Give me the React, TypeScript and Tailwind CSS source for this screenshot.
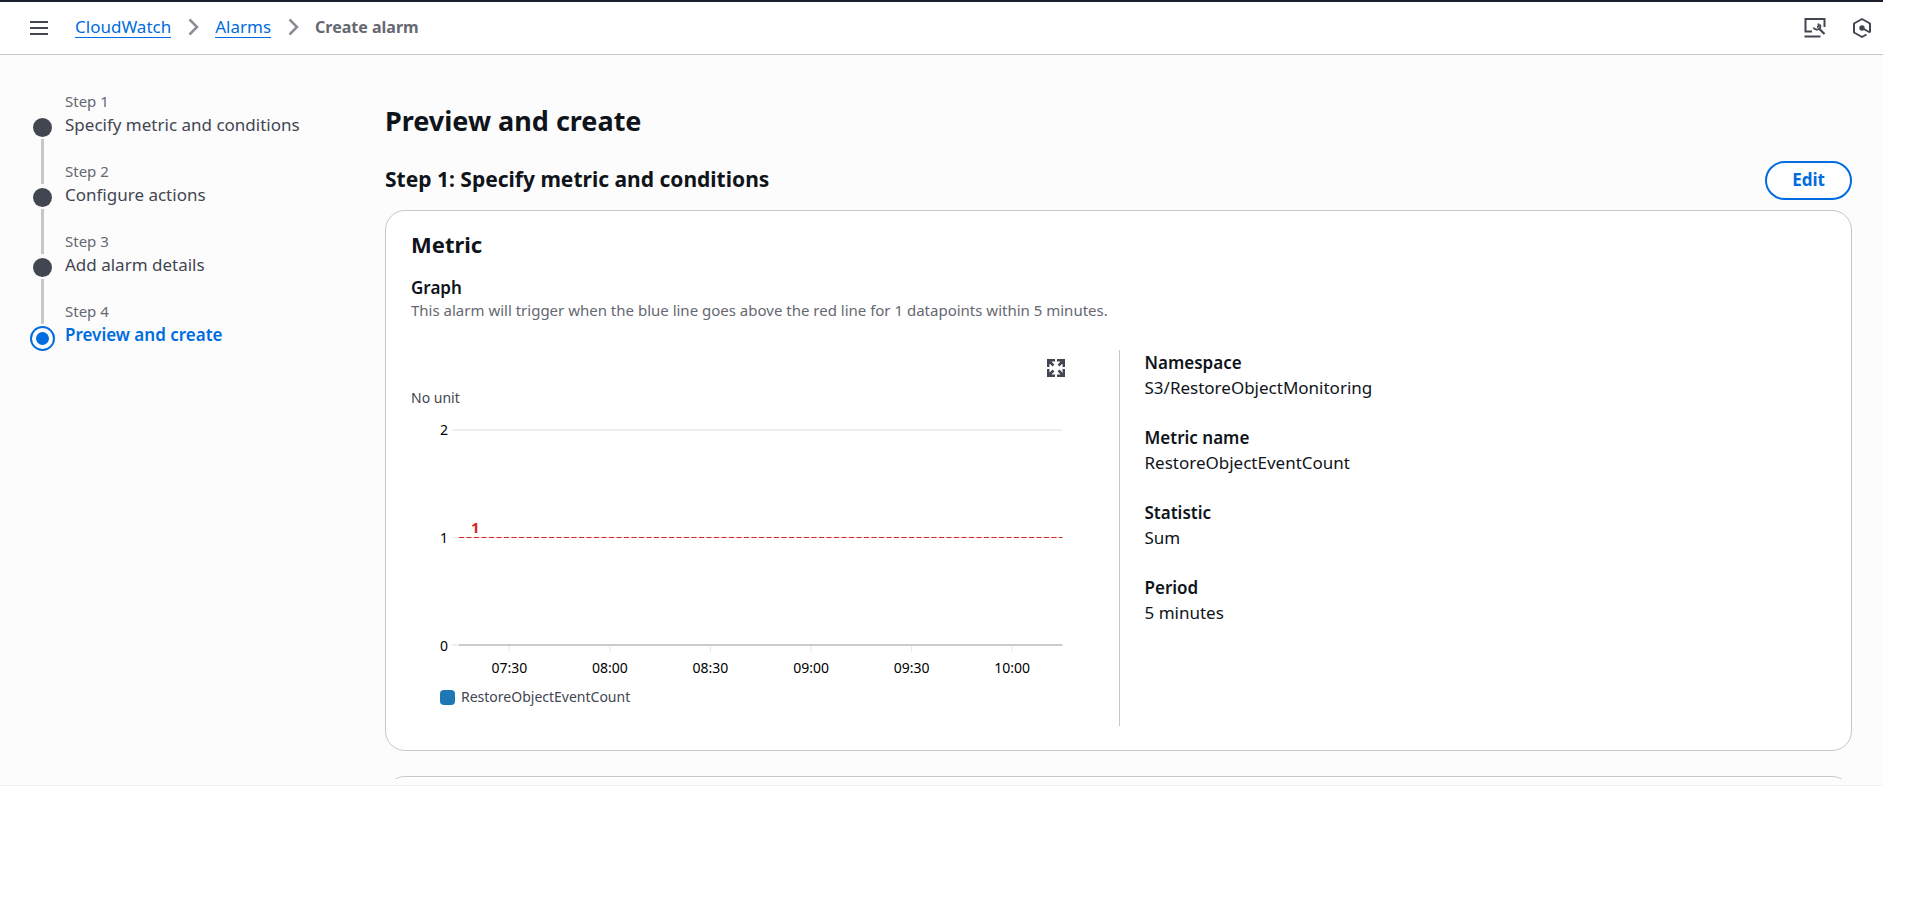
import React from "react";

const steps = [
  "Specify metric and conditions",
  "Configure actions",
  "Add alarm details",
  "Preview and create",
];

const details = [
  ["Namespace", "S3/RestoreObjectMonitoring"],
  ["Metric name", "RestoreObjectEventCount"],
  ["Statistic", "Sum"],
  ["Period", "5 minutes"],
];

const times = ["07:30", "08:00", "08:30", "09:00", "09:30", "10:00"];
const tickPositions = ["8.33%", "25%", "41.67%", "58.33%", "75%", "91.67%"];

function Chevron() {
  return (
    <svg className="h-5 w-5" viewBox="0 0 20 20" fill="none" stroke="#8c8c94" strokeWidth="2.5" aria-hidden="true">
      <path d="M6.500 2.500l7.500 7.500-7.500 7.500" />
    </svg>
  );
}

function Header() {
  return (
    <header className="flex h-[55px] items-center border-t-2 border-b border-t-[#1b1f2b] border-b-[#c6c6cd] bg-white pr-[10px] pl-[29px]">
      <button type="button" aria-label="Open navigation" className="flex h-5 w-5 items-center justify-center">
        <svg className="h-5 w-5" viewBox="0 0 20 20" stroke="#424650" strokeWidth="2" aria-hidden="true">
          <path d="M1 4h18M1 10h18M1 16h18" />
        </svg>
      </button>
      <nav aria-label="Breadcrumb" className="ml-[26px] flex flex-1 items-center pb-0.5 text-[17px] leading-[21px]">
        <a href="#cloudwatch" className="border-b border-[#006ce0] text-[#006ce0]">CloudWatch</a>
        <span className="mx-3"><Chevron /></span>
        <a href="#alarms" className="border-b border-[#006ce0] text-[#006ce0]">Alarms</a>
        <span className="mx-3"><Chevron /></span>
        <span className="text-[16px] font-bold text-[#656871]">Create alarm</span>
      </nav>
      <div className="flex items-center gap-[25px]">
        <button type="button" aria-label="Console tools">
          <svg className="h-[22px] w-[22px]" viewBox="0 0 22 22" fill="none" stroke="#424650" strokeWidth="2" aria-hidden="true">
            <path d="M8 14.500H1.500V2h19v8M.5 19.500h16" />
            <path d="M15 11.500l5.500 5.500" strokeWidth="2.200" />
            <path d="M14.500 6.500v2.300a1.200 1.200 0 0 1-1.200 1.200H13M9.500 10.500c.6 1.700 3.500 2.700 5.500 1.500 1.300-.8 1.700-2.600 1-4.500" strokeWidth="1.800" />
          </svg>
        </button>
        <button type="button" aria-label="Assistant">
          <svg className="h-[22px] w-[22px]" viewBox="0 0 22 22" fill="none" stroke="#424650" strokeWidth="2" strokeLinejoin="round" aria-hidden="true">
            <path d="M15.500 17.500L11 20l-8-4.500v-9L11 2l8 4.500v9M11 11l8 4.500" />
            <circle cx="11" cy="11" r="1.700" fill="#424650" />
          </svg>
        </button>
      </div>
    </header>
  );
}

function Steps() {
  return (
    <nav aria-label="Steps" className="w-[385px] shrink-0 pt-[35px] pl-[30px]">
      <ol>
        {steps.map((title, i) => {
          const current = i === steps.length - 1;
          return (
            <li key={title} className="flex h-[70px] gap-[10px]">
              <div className="flex w-[25px] flex-col items-center">
                <span className={i === 0 ? "h-6" : "h-6 w-[3px] bg-[#c6c6cd]"} />
                {current ? (
                  <span className="mt-0.5 flex h-[25px] w-[25px] shrink-0 items-center justify-center rounded-full border-2 border-[#006ce0]">
                    <span className="h-[13px] w-[13px] rounded-full bg-[#006ce0]" />
                  </span>
                ) : (
                  <>
                    <span className="mt-1 mb-0.5 h-[19px] w-[19px] shrink-0 rounded-full bg-[#424650]" />
                    <span className="w-[3px] flex-1 bg-[#c6c6cd]" />
                  </>
                )}
              </div>
              <div>
                <p className="text-[15px] leading-[22px] text-[#656871]">Step {i + 1}</p>
                {current ? (
                  <p aria-current="step" className="text-[17px] leading-[26px] font-semibold text-[#006ce0]">{title}</p>
                ) : (
                  <a href={"#step-" + (i + 1)} className="block text-[17px] leading-[26px] text-[#424650]">{title}</a>
                )}
              </div>
            </li>
          );
        })}
      </ol>
    </nav>
  );
}

function Chart() {
  return (
    <div className="pr-14 pb-[18px]">
      <div className="flex h-9 items-center justify-end">
        <button type="button" aria-label="Enlarge graph" className="-mr-0.5">
          <svg className="h-[18px] w-[18px]" viewBox="0 0 18 18" fill="none" stroke="#424650" strokeWidth="2.500" aria-hidden="true">
            <path d="M1.200 8V1.200H8M10 1.200h6.800V8M16.800 10v6.800H10M8 16.800H1.200V10M2 2l4.500 4.500M16 2l-4.500 4.500M16 16l-4.500-4.500M2 16l4.500-4.500" />
          </svg>
        </button>
      </div>
      <p className="text-[14px] leading-6 text-[#424650]">No unit</p>
      <div className="flex pt-[9px] pl-[29px]">
        <div className="flex h-[238px] w-3 flex-col justify-between text-[14px] leading-[22px] text-black">
          <span>2</span>
          <span>1</span>
          <span>0</span>
        </div>
        <div className="flex-1 pt-[10px]">
          <svg className="h-[224px] w-full" role="img" aria-label="RestoreObjectEventCount threshold graph">
            <line x1="0" x2="100%" y1="1" y2="1" stroke="#eee" strokeWidth="2" />
            <line x1="0" x2="7" y1="108.500" y2="108.500" stroke="#e9ebed" />
            <line x1="7" x2="100%" y1="108.500" y2="108.500" stroke="#fadcdc" />
            <line x1="7" x2="100%" y1="108.500" y2="108.500" stroke="#d62728" strokeDasharray="5 2.500" />
            <text x="19" y="104" fill="#d62728" fontSize="15" fontWeight="700">1</text>
            <line x1="0" x2="7" y1="216" y2="216" stroke="#eee" strokeWidth="2" />
            <line x1="7" x2="100%" y1="216" y2="216" stroke="#ccc" strokeWidth="2" />
            <svg x="7" className="overflow-visible" style={{ width: "calc(100% - 7px)" }}>
              {tickPositions.map((x) => (
                <line key={x} x1={x} x2={x} y1="217" y2="223" stroke="#e6e6e6" />
              ))}
            </svg>
          </svg>
          <div className="grid grid-cols-6 pt-1 pl-[7px] text-center text-[14px] leading-[22px] text-black">
            {times.map((t) => (
              <span key={t}>{t}</span>
            ))}
          </div>
        </div>
      </div>
      <div className="flex items-center gap-[6px] pt-[7px] pl-[29px] text-[14px] leading-[22px] text-[#424650]">
        <span className="h-[15px] w-[15px] rounded-[4px] bg-[#1f77b4]" />
        RestoreObjectEventCount
      </div>
    </div>
  );
}

export default function App() {
  return (
    <div className="min-h-screen bg-white font-['Noto_Sans',sans-serif] text-[#0f141a]">
      <div className="mr-[31px] border-b border-[#f0f0f0] bg-[#fcfcfd]">
        <Header />
        <div className="flex pb-[6px]">
          <Steps />
          <main className="min-w-0 flex-1 pr-[31px]">
            <h1 className="pt-[47px] text-[27px] leading-[38px] font-bold">Preview and create</h1>
            <div className="flex items-center justify-between pt-[21px] pb-[10px]">
              <h2 className="pb-1 text-[21px] leading-7 font-bold">Step 1: Specify metric and conditions</h2>
              <button type="button" className="h-[39px] rounded-full border-2 border-[#006ce0] bg-white px-[25px] pb-0.5 text-[17px] leading-6 font-bold text-[#006ce0]">
                Edit
              </button>
            </div>
            <section className="rounded-[20px] border border-[#c6c6cd] bg-white px-[25px] pt-[18px] pb-6">
              <h2 className="text-[22px] leading-[30px] font-bold">Metric</h2>
              <h3 className="pt-4 text-[17px] leading-[25px] font-semibold">Graph</h3>
              <p className="text-[15px] leading-5 text-[#656871]">
                This alarm will trigger when the blue line goes above the red line for 1 datapoints within 5 minutes.
              </p>
              <div className="mt-[30px] grid grid-cols-2">
                <Chart />
                <dl className="flex flex-col gap-[25px] border-l border-[#c6c6cd] pl-[25px] text-[17px] leading-[25px]">
                  {details.map(([term, value]) => (
                    <div key={term}>
                      <dt className="font-semibold">{term}</dt>
                      <dd>{value}</dd>
                    </div>
                  ))}
                </dl>
              </div>
            </section>
            <div className="mt-[25px] h-[3px] overflow-hidden">
              <div className="h-10 rounded-[20px] border border-[#c6c6cd] bg-white" />
            </div>
          </main>
        </div>
      </div>
    </div>
  );
}
